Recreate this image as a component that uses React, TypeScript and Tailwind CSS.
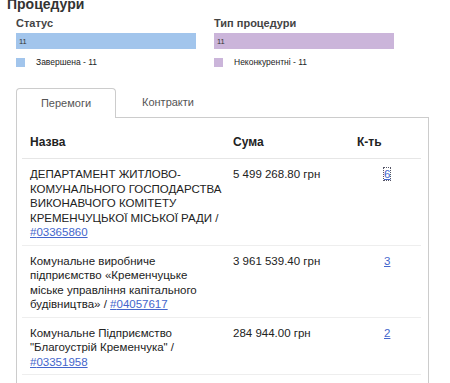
import React, { useState } from 'react';

type Winner = {
  name: string;
  code: string;
  amount: string;
  count: number;
};

const WINNERS: Winner[] = [
  {
    name: 'ДЕПАРТАМЕНТ ЖИТЛОВО-КОМУНАЛЬНОГО ГОСПОДАРСТВА ВИКОНАВЧОГО КОМІТЕТУ КРЕМЕНЧУЦЬКОЇ МІСЬКОЇ РАДИ',
    code: '03365860',
    amount: '5 499 268.80 грн',
    count: 6,
  },
  {
    name: 'Комунальне виробниче підприємство «Кременчуцьке міське управління капітального будівництва»',
    code: '04057617',
    amount: '3 961 539.40 грн',
    count: 3,
  },
  {
    name: 'Комунальне Підприємство "Благоустрій Кременчука"',
    code: '03351958',
    amount: '284 944.00 грн',
    count: 2,
  },
];

function StatBlock({ title, value, label, color }: { title: string; value: number; label: string; color: string }) {
  return (
    <div className="w-[180px]">
      <div className="text-[11px] leading-[13px] font-bold text-[#444] mt-[5px]">{title}</div>
      <div className={`h-[16px] mt-[3px] pl-[3px] pt-[5px] text-[7.5px] leading-[8px] text-[#333] ${color}`}>{value}</div>
      <div className="flex items-center mt-[8px]">
        <span className={`w-[9px] h-[9px] ${color}`} />
        <span className="ml-[11px] text-[8.5px] leading-[10px] text-[#222]">{label}</span>
      </div>
    </div>
  );
}

export default function App() {
  const [tab, setTab] = useState<'wins' | 'contracts'>('wins');

  return (
    <div className="w-[450px] h-[383px] overflow-hidden bg-white font-['Liberation_Sans',Arial,sans-serif] text-[#222]">
      <h2 className="pl-[7px] -mt-[4px] text-[14px] leading-[16px] font-bold text-[#333]">Процедури</h2>

      <div className="flex gap-[18px] pl-[16px]">
        <StatBlock title="Статус" value={11} label="Завершена - 11" color="bg-[#a2c5ec]" />
        <StatBlock title="Тип процедури" value={11} label="Неконкурентні - 11" color="bg-[#cbb5da]" />
      </div>

      <div className="ml-[16px] mt-[20px] w-[413px]">
        <div className="flex">
          <button
            onClick={() => setTab('wins')}
            className={`w-[100px] h-[30px] text-[11px] text-[#555] rounded-t-[4px] ${tab === 'wins' ? 'border border-b-0 border-[#ccc] bg-white relative top-[1px]' : 'border-b border-[#ccc]'}`}
          >
            Перемоги
          </button>
          <button
            onClick={() => setTab('contracts')}
            className={`w-[100px] h-[30px] pl-[4px] text-[11px] text-[#555] rounded-t-[4px] ${tab === 'contracts' ? 'border border-b-0 border-[#ccc] bg-white relative top-[1px]' : ''}`}
          >
            Контракти
          </button>
          <div className="flex-1" />
        </div>

        <div className="border border-[#ccc] h-[300px] pl-[5px] pr-[7px]">
          <table className="w-full table-fixed border-collapse text-[11.5px] leading-[14.5px]">
            <thead>
              <tr className="border-b border-[#e6e6e6]">
                <th className="w-[203px] pl-[8px] pt-[18px] pb-[10px] text-left text-[12px] leading-[12px] font-bold text-[#222]">Назва</th>
                <th className="w-[125px] pl-[8px] pt-[18px] pb-[10px] text-left text-[12px] leading-[12px] font-bold text-[#222]">Сума</th>
                <th className="pl-[7px] pt-[18px] pb-[10px] text-left text-[12px] leading-[12px] font-bold text-[#222]">К-ть</th>
              </tr>
            </thead>
            <tbody>
              {WINNERS.map((w, i) => (
                <tr key={w.code} className="border-b border-[#eeeeee] align-top">
                  <td className="pl-[8px] pr-[2px] pt-[8px] pb-[5px]">
                    {w.name} / <a href="#" className="text-[#4466cc] underline">#{w.code}</a>
                  </td>
                  <td className="pl-[8px] pt-[8px] pb-[5px] whitespace-nowrap">{w.amount}</td>
                  <td className="pl-[34px] pt-[8px] pb-[5px]">
                    <a href="#" className={`text-[#4466cc] underline ${i === 0 ? 'outline outline-1 outline-dotted outline-[#556]' : ''}`}>{w.count}</a>
                  </td>
                </tr>
              ))}
            </tbody>
          </table>
        </div>
      </div>
    </div>
  );
}
